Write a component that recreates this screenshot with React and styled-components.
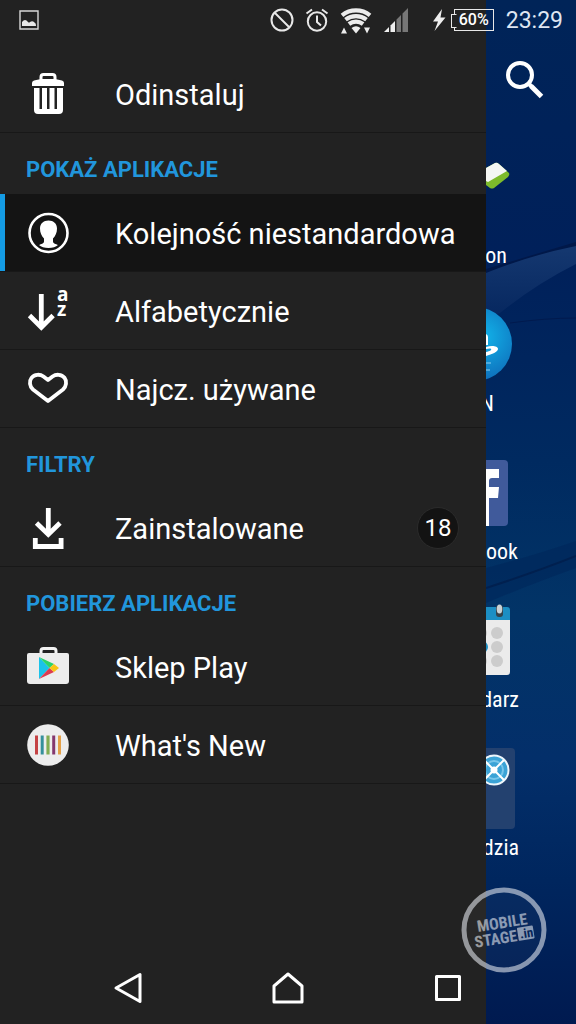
// src/App.jsx
import React from 'react';
import styled, { createGlobalStyle } from 'styled-components';

const GlobalStyle = createGlobalStyle`
  * {
    box-sizing: border-box;
  }

  body {
    margin: 0;
    background: #222;
    color: #fff;
    font-family: Roboto, 'Noto Sans', sans-serif;
  }
`;

const Screen = styled.div`
  position: relative;
  display: grid;
  grid-template-columns: minmax(0, 1fr) 90px;
  grid-template-rows: 40px 1fr 72px;
  min-height: 100vh;
  overflow: hidden;
`;

const StatusBar = styled.header`
  grid-column: 1 / -1;
  grid-row: 1;
  z-index: 2;
  display: flex;
  align-items: center;
  justify-content: space-between;
  padding: 0 13px 0 19px;
`;

const StatusGroup = styled.div`
  display: flex;
  align-items: center;
  gap: ${(props) => props.$gap || 0}px;
`;

const Battery = styled.span`
  position: relative;
  width: 40px;
  height: 22px;
  border: 1px solid #e8e8e8;
  margin-left: 4px;
  font-size: 16px;
  font-weight: 500;
  line-height: 20px;
  text-align: center;

  &::before {
    content: '';
    position: absolute;
    left: -4px;
    top: 4px;
    width: 4px;
    height: 12px;
    border: 1px solid #e8e8e8;
    border-right-color: #222;
    background: #222;
  }
`;

const Clock = styled.time`
  padding-top: 2px;
  color: #dfe6f2;
  font-size: 23px;
  line-height: 28px;
`;

const Drawer = styled.nav`
  grid-column: 1;
  grid-row: 1 / -1;
  z-index: 1;
  padding-top: 55px;
  background: #222;
`;

const SectionTitle = styled.h2`
  margin: 0;
  padding: 24px 26px 11px;
  color: #2196dc;
  font-size: 22px;
  font-weight: 700;
  line-height: 26px;
`;

const MenuItem = styled.button`
  display: flex;
  align-items: center;
  gap: 46px;
  width: 100%;
  height: 78px;
  padding: 0 27px;
  border: 0;
  border-bottom: 1px solid #181818;
  background: ${(props) => (props.$selected ? '#141414' : 'transparent')};
  box-shadow: ${(props) => (props.$selected ? 'inset 5px 0 #149be4' : 'none')};
  color: #fff;
  font-family: inherit;
  font-size: 29px;
  line-height: 36px;
  text-align: left;
  cursor: pointer;

  svg {
    flex: none;
  }
`;

const MenuLabel = styled.span`
  padding-top: 2px;
`;

const Badge = styled.span`
  width: 42px;
  height: 42px;
  margin-left: auto;
  border: 1px solid #2b2b2b;
  border-radius: 50%;
  background: #131313;
  font-size: 24px;
  line-height: 40px;
  text-align: center;
`;

const Home = styled.main`
  grid-column: 2;
  grid-row: 1 / -1;
  position: relative;
  padding-top: 40px;
  background: linear-gradient(
    #002458,
    #00205a 25%,
    #002a60 45%,
    #023467 60%,
    #032f6a 74%,
    #00265e 86%,
    #001a50
  );
  overflow: hidden;
`;

const Wallpaper = styled.svg`
  position: absolute;
  inset: 0;
  width: 100%;
  height: 100%;
`;

const SearchButton = styled.button`
  position: relative;
  display: flex;
  width: 100%;
  height: 93px;
  padding: 20px 0 0 19px;
  border: 0;
  background: none;
  cursor: pointer;
`;

const AppShortcut = styled.a`
  position: relative;
  display: block;
  height: 148px;
  color: #fff;
  text-decoration: none;

  svg {
    display: block;
  }
`;

const AppLabel = styled.span`
  display: flex;
  justify-content: flex-end;
  width: ${(props) => props.$visible}px;
  overflow: hidden;
  font-family: 'Roboto Condensed', 'Liberation Sans Narrow', Roboto, sans-serif;
  font-size: 22px;
  line-height: 26px;
`;

const NavBar = styled.footer`
  grid-column: 1 / -1;
  grid-row: 3;
  z-index: 2;
  display: grid;
  grid-template-columns: repeat(3, 1fr);
  padding: 0 48px;
`;

const NavButton = styled.button`
  display: flex;
  align-items: center;
  justify-content: center;
  padding: 0;
  border: 0;
  background: none;
  cursor: pointer;
`;

const Watermark = styled.svg`
  position: absolute;
  right: 29px;
  bottom: 51px;
  z-index: 3;
  pointer-events: none;
`;

const Icon = ({ children }) => (
  <svg width="42" height="42" viewBox="0 0 42 42" fill="none" overflow="visible" aria-hidden="true">
    {children}
  </svg>
);

const TrashIcon = () => (
  <Icon>
    <path d="M14 8V4q0-2.500 2.500-2.500h9Q28 1.500 28 4v4" stroke="#fff" strokeWidth="3" />
    <path d="M5 10q0-2 2-2.500L14 6h14l7 1.500q2 .5 2 2.500v3H5z" fill="#fff" />
    <path
      d="M7 15h5.500v21h2.500V15h5v21h2.500V15h5v21H30V15h6v22q0 4-4 4H11q-4 0-4-4z"
      fill="#fff"
    />
  </Icon>
);

const PersonIcon = () => (
  <Icon>
    <circle cx="21.500" cy="21" r="19" stroke="#fff" strokeWidth="2.600" />
    <path
      d="M21.500 8.500c5 0 8.500 3 8.500 8 0 4-1.500 7.500-4 10v3c0 2 3 2.500 5 3.500-2 2-5.500 3-9.500 3s-7.500-1-9.500-3c2-1 5-1.500 5-3.500v-3c-2.500-2.500-4-6-4-10 0-5 3.500-8 8.500-8z"
      fill="#fff"
    />
  </Icon>
);

const SortIcon = () => (
  <Icon>
    <path d="M14.300 4v33M2.500 25.500l11.800 11.800 11.800-11.800" stroke="#fff" strokeWidth="4.800" />
    <g fill="#fff" fontFamily="'Open Sans', sans-serif" fontSize="19" fontWeight="700">
      <text x="30" y="11">a</text>
      <text x="30" y="26">z</text>
    </g>
  </Icon>
);

const HeartIcon = () => (
  <Icon>
    <path
      d="M21 33L6 21.500C2.500 18.500 2 13 4.500 9.800 7.500 6 13 6 16.500 8.500L21 12l4.500-3.500C29 6 34.500 6 37.500 9.800 40 13 39.500 18.500 36 21.500z"
      stroke="#fff"
      strokeWidth="3.800"
      strokeLinejoin="round"
    />
  </Icon>
);

const DownloadIcon = () => (
  <Icon>
    <path d="M21.300 1v26M9.500 16l11.800 11.500L33 16" stroke="#fff" strokeWidth="4.800" />
    <path d="M8.300 31v8.500h25.800V31" stroke="#fff" strokeWidth="4.800" />
  </Icon>
);

const PlayStoreIcon = () => (
  <Icon>
    <path d="M14 8V5q0-2.500 2.500-2.500h10Q29 2.500 29 5v3" stroke="#f2f2f2" strokeWidth="3" />
    <path d="M0 9q0-2 2-2h38q2 0 2 2v26q0 3-3 3H3q-3 0-3-3z" fill="#ececec" />
    <path d="M12 11v22l10.500-11z" fill="#1bc3ea" />
    <path d="M12 11l10.500 11 4.500-4z" fill="#2bd36c" />
    <path d="M12 33l10.500-11 4.500 4z" fill="#dc3b50" />
    <path d="M22.500 22l4.500-4 5 4-5 4z" fill="#f8c514" />
  </Icon>
);

const WhatsNewIcon = () => (
  <Icon>
    <circle cx="21" cy="21" r="20.800" fill="#ededed" />
    <path d="M8 11.500h3v19H8z" fill="#c54345" />
    <path d="M13.700 11.500h3v19h-3z" fill="#35909b" />
    <path d="M19.400 11.500h3.200v19h-3.200z" fill="#82ad52" />
    <path d="M25.200 11.500h3v19h-3z" fill="#84386e" />
    <path d="M31 11.500h3v19h-3z" fill="#e5a148" />
  </Icon>
);

const sections = [
  { items: [{ label: 'Odinstaluj', icon: TrashIcon }] },
  {
    title: 'POKAŻ APLIKACJE',
    items: [
      { label: 'Kolejność niestandardowa', icon: PersonIcon, selected: true },
      { label: 'Alfabetycznie', icon: SortIcon },
      { label: 'Najcz. używane', icon: HeartIcon },
    ],
  },
  {
    title: 'FILTRY',
    items: [{ label: 'Zainstalowane', icon: DownloadIcon, count: 18 }],
  },
  {
    title: 'POBIERZ APLIKACJE',
    items: [
      { label: 'Sklep Play', icon: PlayStoreIcon },
      { label: "What's New", icon: WhatsNewIcon },
    ],
  },
];

// The drawer covers the left part of every shortcut
const apps = [
  {
    label: 'on',
    visible: 21,
    art: (
      <>
        <path d="M0 35l9-5q2-1 4 1l10 9q1 2-1 4L8 55q-2 1-4 0l-4-3z" fill="#7dbb2b" />
        <path d="M0 35l9-5q2-1 4 1l8 7L2 49l-2-1z" fill="#f5f7f4" />
      </>
    ),
  },
  {
    label: 'N',
    visible: 8,
    art: (
      <>
        <circle cx="-11" cy="63" r="37" fill="url(#disc)" />
        <path d="M0 53q2 1 2 3v8H0z" fill="#fff" />
        <path d="M0 66c6-2 12-1 12 2s-6 5-12 7v-4c4-1 6-2 5-3s-3 0-5 0z" fill="#fff" />
        <path d="M0 82h5M0 89h4" stroke="#8fd0f0" strokeWidth="1" />
      </>
    ),
  },
  {
    label: 'ook',
    visible: 32,
    art: (
      <>
        <path d="M0 31h18q4 0 4 4v58q0 4-4 4H0z" fill="#405a9b" />
        <path d="M0 40h13v9H6q-3 0-3 3v6h10l-1 11H3v28H0z" fill="#fff" />
      </>
    ),
  },
  {
    label: 'darz',
    visible: 33,
    art: (
      <>
        <path d="M0 41h24v54q0 3-3 3H0z" fill="#ebebeb" />
        <path d="M0 30h21q3 0 3 3v10H0z" fill="#1c8fc4" />
        <rect x="10" y="28" width="7" height="12" rx="3" fill="#35444c" />
        <ellipse cx="13.500" cy="32" rx="2.800" ry="4.500" fill="#cbd3d6" />
        <g fill="#ccc">
          <circle cx="-5" cy="56" r="6" />
          <circle cx="11" cy="56" r="6" />
          <circle cx="11" cy="70" r="6" />
          <circle cx="-5" cy="84" r="6" />
          <circle cx="11" cy="84" r="6" />
        </g>
        <circle cx="-4" cy="70" r="6" fill="#1c8fc4" />
      </>
    ),
  },
  {
    label: 'dzia',
    visible: 33,
    art: (
      <>
        <path d="M0 23h25q4 0 4 4v73q0 4-4 4H0z" fill="#23416f" />
        <circle cx="8" cy="45" r="14.500" fill="#3ba3d6" stroke="#eef6fb" strokeWidth="2" />
        <circle cx="8" cy="45" r="9" stroke="#78c6ea" strokeWidth="2" />
        <path d="M-2 35l20 20M18 35L-2 55" stroke="#fff" strokeWidth="2" />
        <circle cx="8" cy="45" r="3.500" fill="#fff" />
      </>
    ),
  },
];

const StatusIcons = () => (
  <StatusGroup $gap={11}>
    <svg width="24" height="24" viewBox="0 0 24 24" fill="none" stroke="#e8e8e8" strokeWidth="2">
      <circle cx="12" cy="12" r="10.500" />
      <path d="M4.500 4.500l15 15" />
    </svg>
    <svg width="24" height="24" viewBox="0 0 24 24" fill="none" stroke="#e8e8e8" strokeWidth="2">
      <circle cx="12" cy="13.500" r="9.200" />
      <path d="M12 7.500v6.500l4 3.500M1.500 5.500L7 1.500M22.500 5.500L17 1.500" />
    </svg>
    <svg width="32" height="28" viewBox="0 0 32 28" fill="none" stroke="#ececec" strokeWidth="4.200">
      <path d="M2 9.300A22.500 22.500 0 0 1 30 9.300" />
      <path d="M5.500 13.700A17 17 0 0 1 26.500 13.700" />
      <path d="M8.900 18A11.500 11.500 0 0 1 23.100 18" />
      <path
        d="M11.500 22q4.500-3.500 9 0L16 27.500zM1 27.500l3-6 3 6zM24 21.500h6l-3 6z"
        fill="#ececec"
        stroke="none"
      />
    </svg>
    <svg width="26" height="26" viewBox="0 0 26 26">
      <path d="M1 25l5-5v5z" fill="#eee" />
      <path d="M7.500 18.500L12 14v11H7.500z" fill="#eee" />
      <path d="M13.500 12.500L18 8v17h-4.500zM19.500 6.500L25 1v24h-5.500z" fill="#777" />
    </svg>
  </StatusGroup>
);

const App = () => {
  return (
    <>
      <GlobalStyle />
      <Screen>
        <StatusBar>
          <svg width="20" height="20" viewBox="0 0 20 20" fill="none">
            <path d="M1 1h18v18H1z" stroke="#d8d8d8" strokeWidth="1.400" />
            <path d="M3 16v-4q3-4 6 0 1 1 2 0 3-2 5 1 1 0 1 3z" fill="#e8e8e8" />
          </svg>
          <StatusGroup $gap={23}>
            <StatusIcons />
            <StatusGroup $gap={4}>
              <svg width="14" height="22" viewBox="0 0 14 22">
                <path d="M10 0L1 12.500h5L2.500 22 13.500 8.500H8.500z" fill="#eee" />
              </svg>
              <StatusGroup $gap={12}>
                <Battery>60%</Battery>
                <Clock>23:29</Clock>
              </StatusGroup>
            </StatusGroup>
          </StatusGroup>
        </StatusBar>

        <Drawer>
          {sections.map((section) => (
            <section key={section.title || 'actions'}>
              {section.title && <SectionTitle>{section.title}</SectionTitle>}
              {section.items.map(({ label, icon: ItemIcon, selected, count }) => (
                <MenuItem key={label} type="button" $selected={selected}>
                  <ItemIcon />
                  <MenuLabel>{label}</MenuLabel>
                  {count && <Badge>{count}</Badge>}
                </MenuItem>
              ))}
            </section>
          ))}
        </Drawer>

        <Home>
          <Wallpaper viewBox="0 0 90 1024" preserveAspectRatio="none" aria-hidden="true">
            <defs>
              <linearGradient id="ribbon" x1="0" y1="0" x2="0" y2="1">
                <stop offset="0" stopColor="#153870" />
                <stop offset="1" stopColor="#06275f" />
              </linearGradient>
              <radialGradient id="disc" cx="0.600" cy="0.400" r="0.600">
                <stop offset="0" stopColor="#12b4ea" />
                <stop offset="1" stopColor="#0e6fbb" />
              </radialGradient>
            </defs>
            <path d="M0 269Q50 254 90 242v6Q50 256 0 275z" fill="#001849" />
            <path d="M0 273Q45 255 90 246v18Q50 284 14 313L0 318z" fill="url(#ribbon)" />
            <path d="M24 323Q60 318 90 318" fill="none" stroke="#001a4e" />
            <path d="M0 568Q50 555 90 541v27Q40 586 0 603z" fill="#00265a" opacity="0.600" />
            <path d="M0 588Q50 572 90 556" fill="none" stroke="#00204f" strokeWidth="2" />
          </Wallpaper>
          <SearchButton type="button" aria-label="Szukaj">
            <svg width="40" height="40" viewBox="0 0 40 40" fill="none" stroke="#fff">
              <circle cx="15" cy="15" r="12" strokeWidth="4" />
              <path d="M23.500 23.500l3 3" strokeWidth="4" />
              <path d="M26 26l10.500 10.500" strokeWidth="5" />
            </svg>
          </SearchButton>
          {apps.map((app) => (
            <AppShortcut key={app.label} href="#">
              <svg width="90" height="110" viewBox="0 0 90 110" fill="none" aria-hidden="true">
                {app.art}
              </svg>
              <AppLabel $visible={app.visible}>{app.label}</AppLabel>
            </AppShortcut>
          ))}
        </Home>

        <NavBar>
          <NavButton type="button" aria-label="Wstecz">
            <svg width="32" height="32" viewBox="0 0 32 32" fill="none">
              <path d="M28 2.500v27L4 16z" stroke="#fff" strokeWidth="3" strokeLinejoin="round" />
            </svg>
          </NavButton>
          <NavButton type="button" aria-label="Ekran główny">
            <svg width="32" height="32" viewBox="0 0 32 32" fill="none">
              <path d="M2 30V14L16 2l14 12v16z" stroke="#fff" strokeWidth="3" strokeLinejoin="round" />
            </svg>
          </NavButton>
          <NavButton type="button" aria-label="Ostatnie">
            <svg width="32" height="32" viewBox="0 0 32 32" fill="none">
              <path d="M4.500 4.500h23v23h-23z" stroke="#fff" strokeWidth="3" strokeLinejoin="round" />
            </svg>
          </NavButton>
        </NavBar>

        <Watermark width="86" height="86" viewBox="0 0 86 86" aria-hidden="true">
          <g opacity="0.580">
            <circle cx="43" cy="43" r="40" fill="#fff" fillOpacity="0.050" stroke="#e8ecf2" strokeWidth="5" />
            <g
              transform="rotate(-9 43 43)"
              fill="#f0f2f6"
              fontFamily="'Roboto Condensed', 'Liberation Sans Narrow', sans-serif"
              fontSize="16"
              fontWeight="700"
            >
              <text x="17" y="41">MOBILE</text>
              <text x="12" y="56">STAGE</text>
              <rect x="56" y="43" width="16" height="13" rx="1" />
              <text x="58" y="54" fontSize="13" fill="#0c2a5c">.in</text>
            </g>
          </g>
        </Watermark>
      </Screen>
    </>
  );
};

export default App;
